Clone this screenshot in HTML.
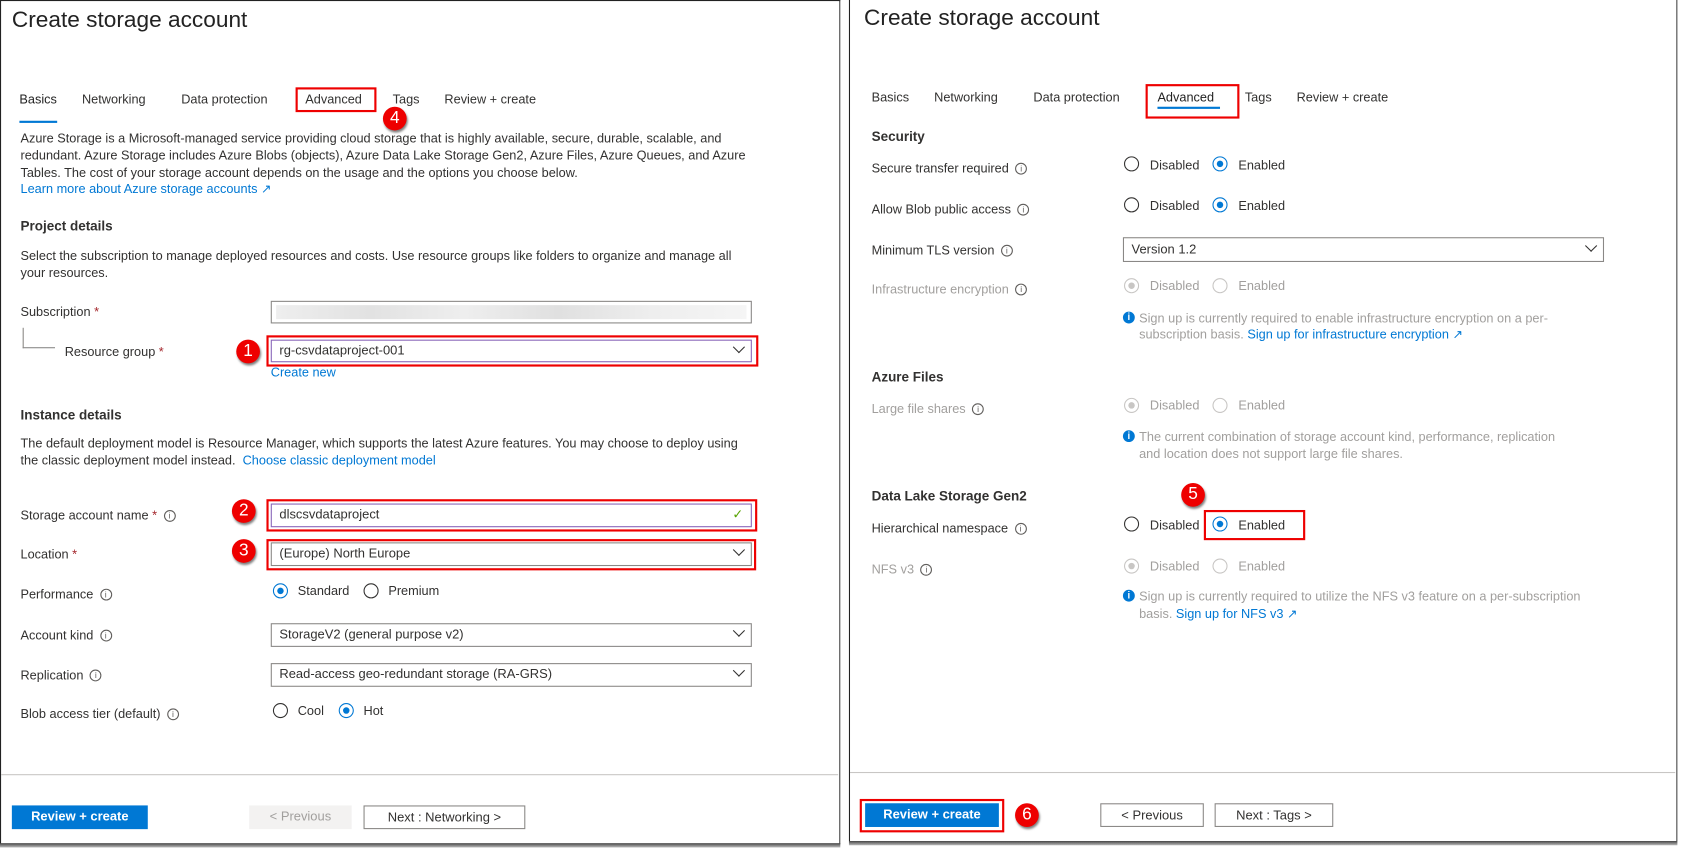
<!DOCTYPE html>
<html><head><meta charset="utf-8"><style>
html,body{margin:0;padding:0;width:1686px;height:855px;overflow:hidden;background:#fff}
#s{position:absolute;left:0;top:0;width:1563px;height:793px;transform:scale(1.0787,1.0782);transform-origin:0 0;font-family:"Liberation Sans",sans-serif;color:#323130;font-size:11.8px}
.p{position:absolute;background:#fff;border:1px solid #222}
.t{position:absolute;white-space:nowrap;line-height:16px}
.h1{font-size:21px;color:#222;line-height:24px}
.b{font-weight:bold;font-size:12.5px}
.lk{color:#0078d4}
.g{color:#a19f9d}
.in{position:absolute;border:1px solid #8a8886;background:#fff;height:20px;box-sizing:border-box;padding-left:7px;line-height:18px;font-size:12px}
.chev{position:absolute;right:7px;width:7px;height:7px;border-right:1.3px solid #323130;border-bottom:1.3px solid #323130;transform:rotate(45deg);top:2px}
.rb{position:absolute;border:2px solid #e00;box-sizing:border-box}
.num{position:absolute;width:22px;height:22px;border-radius:50%;background:#e00;color:#fff;font-size:16px;text-align:center;line-height:22px;box-shadow:1px 2px 2px rgba(0,0,0,.5)}
.r{position:absolute;width:14px;height:14px;border:1px solid #323130;border-radius:50%;box-sizing:border-box}
.r.c{border-color:#0078d4}
.r.c:after{content:"";position:absolute;left:3px;top:3px;width:6px;height:6px;border-radius:50%;background:#0078d4}
.r.gd{border-color:#c8c6c4}
.r.gc{border-color:#c8c6c4}
.r.gc:after{content:"";position:absolute;left:3px;top:3px;width:6px;height:6px;border-radius:50%;background:#c8c6c4}
.i{display:inline-block;width:9px;height:9px;border:1px solid #605e5c;border-radius:50%;font-size:8px;line-height:9px;text-align:center;vertical-align:middle;margin-left:6px;color:#605e5c}
.ii{position:absolute;width:11px;height:11px;border-radius:50%;background:#0078d4;color:#fff;font-size:9px;font-weight:bold;line-height:11px;text-align:center}
.btn{position:absolute;height:22px;box-sizing:border-box;text-align:center;line-height:20px;font-size:12px}
.hr{position:absolute;height:1px;background:#c8c6c4}
</style></head><body><div id="s">
<!-- LEFT PANEL -->
<div class="p" style="left:0;top:0;width:777px;height:782px;border-bottom:none;border-right:1px solid #444"></div>
<div style="position:absolute;left:0;top:782px;width:779px;height:4px;background:linear-gradient(#444,#bbb)"></div>
<div class="t h1" style="left:11px;top:7px">Create storage account</div>
<div class="t" style="left:18px;top:84px;color:#222">Basics</div>
<div style="position:absolute;left:18px;top:112px;width:35px;height:2px;background:#0078d4"></div>
<div class="t" style="left:76px;top:84px">Networking</div>
<div class="t" style="left:168px;top:84px">Data protection</div>
<div class="t" style="left:283px;top:84px">Advanced</div>
<div class="rb" style="left:274px;top:81px;width:75px;height:23px"></div>
<div class="t" style="left:364px;top:84px">Tags</div>
<div class="t" style="left:412px;top:84px">Review + create</div>
<div class="num" style="left:355px;top:99px">4</div>
<div class="t" style="left:19px;top:120px">Azure Storage is a Microsoft-managed service providing cloud storage that is highly available, secure, durable, scalable, and</div>
<div class="t" style="left:19px;top:136px">redundant. Azure Storage includes Azure Blobs (objects), Azure Data Lake Storage Gen2, Azure Files, Azure Queues, and Azure</div>
<div class="t" style="left:19px;top:152px">Tables. The cost of your storage account depends on the usage and the options you choose below.</div>
<div class="t lk" style="left:19px;top:167px">Learn more about Azure storage accounts ↗</div>
<div class="t b" style="left:19px;top:202px">Project details</div>
<div class="t" style="left:19px;top:229px">Select the subscription to manage deployed resources and costs. Use resource groups like folders to organize and manage all</div>
<div class="t" style="left:19px;top:245px">your resources.</div>
<div class="t" style="left:19px;top:281px">Subscription <span style="color:#a4262c">*</span></div>
<div class="in" style="left:251px;top:279px;width:446px;height:21px"><div style="position:absolute;left:4px;top:3px;right:4px;bottom:3px;background:linear-gradient(90deg,#eee,#e2e2e2,#eee,#e0e0e0,#eee,#f5f5f5)"></div></div>
<div style="position:absolute;left:21px;top:304px;width:29px;height:18px;border-left:1px solid #8a8886;border-bottom:1px solid #8a8886"></div>
<div class="t" style="left:60px;top:318px">Resource group <span style="color:#a4262c">*</span></div>
<div class="in" style="left:251px;top:315px;width:446px;height:21px;border-color:#8764b8">rg-csvdataproject-001<div class="chev"></div></div>
<div class="rb" style="left:247px;top:311px;width:456px;height:29px"></div>
<div class="num" style="left:219px;top:315px">1</div>
<div class="t lk" style="left:251px;top:337px">Create new</div>
<div class="t b" style="left:19px;top:377px">Instance details</div>
<div class="t" style="left:19px;top:403px">The default deployment model is Resource Manager, which supports the latest Azure features. You may choose to deploy using</div>
<div class="t" style="left:19px;top:419px">the classic deployment model instead. &nbsp;<span class="lk">Choose classic deployment model</span></div>
<div class="t" style="left:19px;top:470px">Storage account name <span style="color:#a4262c">*</span><span class="i">i</span></div>
<div class="in" style="left:251px;top:467px;width:446px;height:22px;border-color:#8764b8">dlscsvdataproject<span style="position:absolute;right:7px;color:#57a300">✓</span></div>
<div class="rb" style="left:247px;top:463px;width:455px;height:30px"></div>
<div class="num" style="left:215px;top:463px">2</div>
<div class="t" style="left:19px;top:506px">Location <span style="color:#a4262c">*</span></div>
<div class="in" style="left:251px;top:503px;width:446px;height:22px">(Europe) North Europe<div class="chev"></div></div>
<div class="rb" style="left:247px;top:500px;width:454px;height:29px"></div>
<div class="num" style="left:215px;top:500px">3</div>
<div class="t" style="left:19px;top:543px">Performance<span class="i">i</span></div>
<div class="r c" style="left:253px;top:541px"></div><div class="t" style="left:276px;top:540px">Standard</div>
<div class="r" style="left:337px;top:541px"></div><div class="t" style="left:360px;top:540px">Premium</div>
<div class="t" style="left:19px;top:581px">Account kind<span class="i">i</span></div>
<div class="in" style="left:251px;top:578px;width:446px;height:22px">StorageV2 (general purpose v2)<div class="chev"></div></div>
<div class="t" style="left:19px;top:618px">Replication<span class="i">i</span></div>
<div class="in" style="left:251px;top:615px;width:446px;height:22px">Read-access geo-redundant storage (RA-GRS)<div class="chev"></div></div>
<div class="t" style="left:19px;top:654px">Blob access tier (default)<span class="i">i</span></div>
<div class="r" style="left:253px;top:652px"></div><div class="t" style="left:276px;top:651px">Cool</div>
<div class="r c" style="left:314px;top:652px"></div><div class="t" style="left:337px;top:651px">Hot</div>
<div class="hr" style="left:1px;top:718px;width:776px"></div>
<div class="btn" style="left:11px;top:747px;width:126px;background:#0078d4;color:#fff;font-weight:bold">Review + create</div>
<div class="btn" style="left:231px;top:747px;width:95px;background:#f3f2f1;color:#a19f9d">&lt; Previous</div>
<div class="btn" style="left:337px;top:747px;width:150px;border:1px solid #8a8886">Next : Networking &gt;</div>

<!-- RIGHT PANEL -->
<div class="p" style="left:787px;top:0;width:766px;height:780px;border-bottom:none;border-top:none;border-right:1px solid #444"></div>
<div style="position:absolute;left:787px;top:780px;width:768px;height:4px;background:linear-gradient(#444,#bbb)"></div>
<div class="t h1" style="left:801px;top:5px">Create storage account</div>
<div class="t" style="left:808px;top:82px">Basics</div>
<div class="t" style="left:866px;top:82px">Networking</div>
<div class="t" style="left:958px;top:82px">Data protection</div>
<div class="t" style="left:1073px;top:82px;color:#222">Advanced</div>
<div style="position:absolute;left:1073px;top:99px;width:58px;height:2px;background:#0078d4"></div>
<div class="rb" style="left:1062px;top:78px;width:87px;height:32px"></div>
<div class="t" style="left:1154px;top:82px">Tags</div>
<div class="t" style="left:1202px;top:82px">Review + create</div>
<div class="t b" style="left:808px;top:119px">Security</div>
<div class="t" style="left:808px;top:148px">Secure transfer required<span class="i">i</span></div>
<div class="r" style="left:1042px;top:145px"></div><div class="t" style="left:1066px;top:145px">Disabled</div>
<div class="r c" style="left:1124px;top:145px"></div><div class="t" style="left:1148px;top:145px">Enabled</div>
<div class="t" style="left:808px;top:186px">Allow Blob public access<span class="i">i</span></div>
<div class="r" style="left:1042px;top:183px"></div><div class="t" style="left:1066px;top:183px">Disabled</div>
<div class="r c" style="left:1124px;top:183px"></div><div class="t" style="left:1148px;top:183px">Enabled</div>
<div class="t" style="left:808px;top:224px">Minimum TLS version<span class="i">i</span></div>
<div class="in" style="left:1041px;top:220px;width:446px;height:23px;line-height:21px">Version 1.2<div class="chev" style="top:3px"></div></div>
<div class="t g" style="left:808px;top:260px">Infrastructure encryption<span class="i">i</span></div>
<div class="r gc" style="left:1042px;top:258px"></div><div class="t g" style="left:1066px;top:257px">Disabled</div>
<div class="r gd" style="left:1124px;top:258px"></div><div class="t g" style="left:1148px;top:257px">Enabled</div>
<div class="ii" style="left:1041px;top:289px">i</div>
<div class="t g" style="left:1056px;top:287px">Sign up is currently required to enable infrastructure encryption on a per-</div>
<div class="t g" style="left:1056px;top:302px">subscription basis. <span class="lk">Sign up for infrastructure encryption ↗</span></div>
<div class="t b" style="left:808px;top:342px">Azure Files</div>
<div class="t g" style="left:808px;top:371px">Large file shares<span class="i">i</span></div>
<div class="r gc" style="left:1042px;top:369px"></div><div class="t g" style="left:1066px;top:368px">Disabled</div>
<div class="r gd" style="left:1124px;top:369px"></div><div class="t g" style="left:1148px;top:368px">Enabled</div>
<div class="ii" style="left:1041px;top:399px">i</div>
<div class="t g" style="left:1056px;top:397px">The current combination of storage account kind, performance, replication</div>
<div class="t g" style="left:1056px;top:413px">and location does not support large file shares.</div>
<div class="t b" style="left:808px;top:452px">Data Lake Storage Gen2</div>
<div class="t" style="left:808px;top:482px">Hierarchical namespace<span class="i">i</span></div>
<div class="r" style="left:1042px;top:479px"></div><div class="t" style="left:1066px;top:479px">Disabled</div>
<div class="r c" style="left:1124px;top:479px"></div><div class="t" style="left:1148px;top:479px">Enabled</div>
<div class="rb" style="left:1116px;top:473px;width:94px;height:28px"></div>
<div class="num" style="left:1095px;top:448px">5</div>
<div class="t g" style="left:808px;top:520px">NFS v3<span class="i">i</span></div>
<div class="r gc" style="left:1042px;top:518px"></div><div class="t g" style="left:1066px;top:517px">Disabled</div>
<div class="r gd" style="left:1124px;top:518px"></div><div class="t g" style="left:1148px;top:517px">Enabled</div>
<div class="ii" style="left:1041px;top:547px">i</div>
<div class="t g" style="left:1056px;top:545px">Sign up is currently required to utilize the NFS v3 feature on a per-subscription</div>
<div class="t g" style="left:1056px;top:561px">basis. <span class="lk">Sign up for NFS v3 ↗</span></div>
<div class="hr" style="left:788px;top:716px;width:765px"></div>
<div class="btn" style="left:802px;top:745px;width:124px;background:#0078d4;color:#fff;font-weight:bold">Review + create</div>
<div class="rb" style="left:797px;top:741px;width:134px;height:31px"></div>
<div class="num" style="left:941px;top:745px">6</div>
<div class="btn" style="left:1020px;top:745px;width:96px;border:1px solid #8a8886">&lt; Previous</div>
<div class="btn" style="left:1126px;top:745px;width:110px;border:1px solid #8a8886">Next : Tags &gt;</div>
</div></body></html>
